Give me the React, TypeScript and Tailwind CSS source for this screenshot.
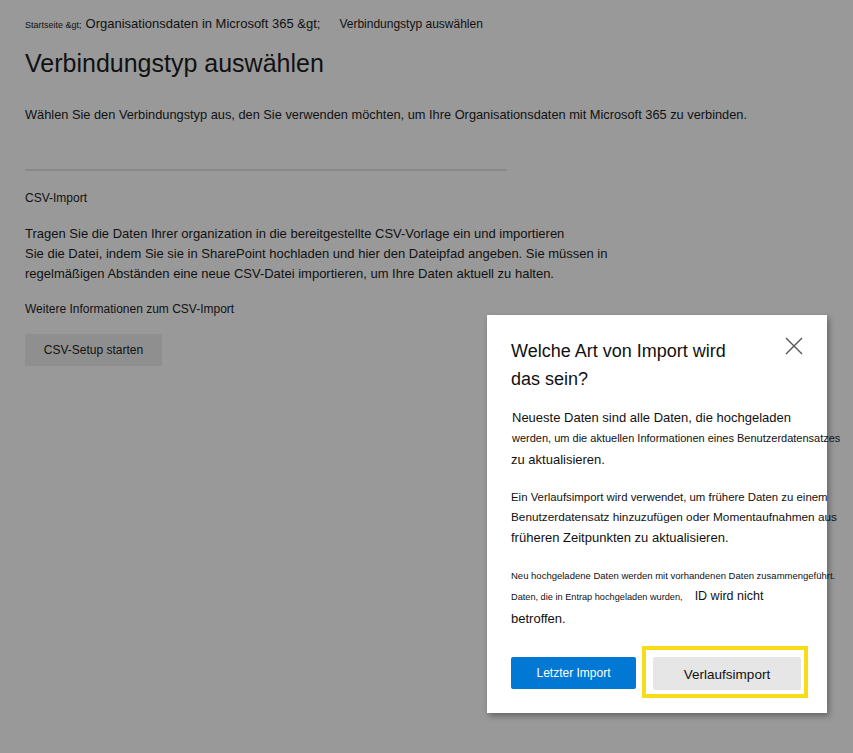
import React from 'react';

const font = { fontFamily: '"Liberation Sans", Arial, sans-serif' };

const ImportTypeDialog: React.FC = () => (
  <div className="absolute left-[487px] top-[315px] w-[340px] h-[398px] bg-white shadow-[2px_3px_6px_rgba(0,0,0,0.35)] px-[24px] pt-[22px] text-[#111]">
    <div className="flex items-start justify-between">
      <h2 className="text-[18px] leading-[28px] text-[#111] w-[230px]">
        Welche Art von Import wird das sein?
      </h2>
      <button className="text-[#555]">
        <svg width="18" height="18" viewBox="0 0 18 18" fill="none" stroke="currentColor" strokeWidth="1.4">
          <path d="M1 1 17 17M17 1 1 17" />
        </svg>
      </button>
    </div>

    <div className="mt-[15px] whitespace-nowrap">
      <p className="text-[13px] leading-[20px] pl-[1px]">Neueste Daten sind alle Daten, die hochgeladen</p>
      <p className="text-[11px] leading-[20px] pl-[1px]">werden, um die aktuellen Informationen eines Benutzerdatensatzes</p>
      <p className="text-[13px] leading-[24px]">zu aktualisieren.</p>

      <p className="mt-[15px] text-[11.4px] leading-[20px]">Ein Verlaufsimport wird verwendet, um frühere Daten zu einem</p>
      <p className="text-[11.8px] leading-[20px]">Benutzerdatensatz hinzuzufügen oder Momentaufnahmen aus</p>
      <p className="text-[13px] leading-[21px]">früheren Zeitpunkten zu aktualisieren.</p>

      <p className="mt-[18px] text-[9.5px] leading-[20px]">Neu hochgeladene Daten werden mit vorhandenen Daten zusammengeführt.</p>
      <p className="text-[9.2px] leading-[20px] flex items-baseline">
        <span>Daten, die in Entrap hochgeladen wurden,</span>
        <span className="ml-[12px] text-[12.5px]">ID wird nicht</span>
      </p>
      <p className="text-[13px] leading-[24px]">betroffen.</p>
    </div>

    <div className="mt-[26px] flex items-start gap-[6px]">
      <button className="shrink-0 w-[125px] h-[32px] bg-[#0078d4] text-white text-[12px] rounded-[2px]">
        Letzter Import
      </button>
      <div className="shrink-0 border-[4px] border-[#f8dc1a] pl-[7px] pr-[3px] pt-[7px] pb-[4px] -mt-[11px]">
        <button className="block w-[148px] h-[33px] bg-[#e6e6e6] text-[#111] text-[13.5px] rounded-[2px] pt-[3px]">
          Verlaufsimport
        </button>
      </div>
    </div>
  </div>
);

export default function App() {
  return (
    <div style={font} className="relative w-[853px] h-[753px] overflow-hidden bg-[#999999] text-[#111]">
      <div className="px-[25px] pt-[14px]">
        {/* Breadcrumb */}
        <nav className="flex items-baseline whitespace-nowrap">
          <span className="text-[9px]">Startseite &amp;gt;</span>
          <span className="ml-[4px] text-[13px]">Organisationsdaten in Microsoft 365 &amp;gt;</span>
          <span className="ml-[19px] text-[12px]">Verbindungstyp auswählen</span>
        </nav>

        <h1 className="mt-[13px] text-[25px] leading-[32px]">Verbindungstyp auswählen</h1>

        <p className="mt-[26px] text-[12.8px] leading-[20px] whitespace-nowrap">
          Wählen Sie den Verbindungstyp aus, den Sie verwenden möchten, um Ihre Organisationsdaten mit Microsoft 365 zu verbinden.
        </p>

        <div className="mt-[44px] w-[482px] h-[2px] bg-[#888]" />

        <h3 className="mt-[17px] text-[12px] leading-[20px]">CSV-Import</h3>

        <div className="mt-[16px] text-[13px] leading-[20px] whitespace-nowrap">
          <p>Tragen Sie die Daten Ihrer organization in die bereitgestellte CSV-Vorlage ein und importieren</p>
          <p>Sie die Datei, indem Sie sie in SharePoint hochladen und hier den Dateipfad angeben. Sie müssen in</p>
          <p>regelmäßigen Abständen eine neue CSV-Datei importieren, um Ihre Daten aktuell zu halten.</p>
        </div>

        <p className="mt-[15px] text-[12px] leading-[20px]">Weitere Informationen zum CSV-Import</p>

        <button className="mt-[15px] w-[137px] h-[32px] bg-[#8f8f8f] text-[12px] rounded-[2px] text-[#111]">
          CSV-Setup starten
        </button>
      </div>

      <ImportTypeDialog />
    </div>
  );
}
